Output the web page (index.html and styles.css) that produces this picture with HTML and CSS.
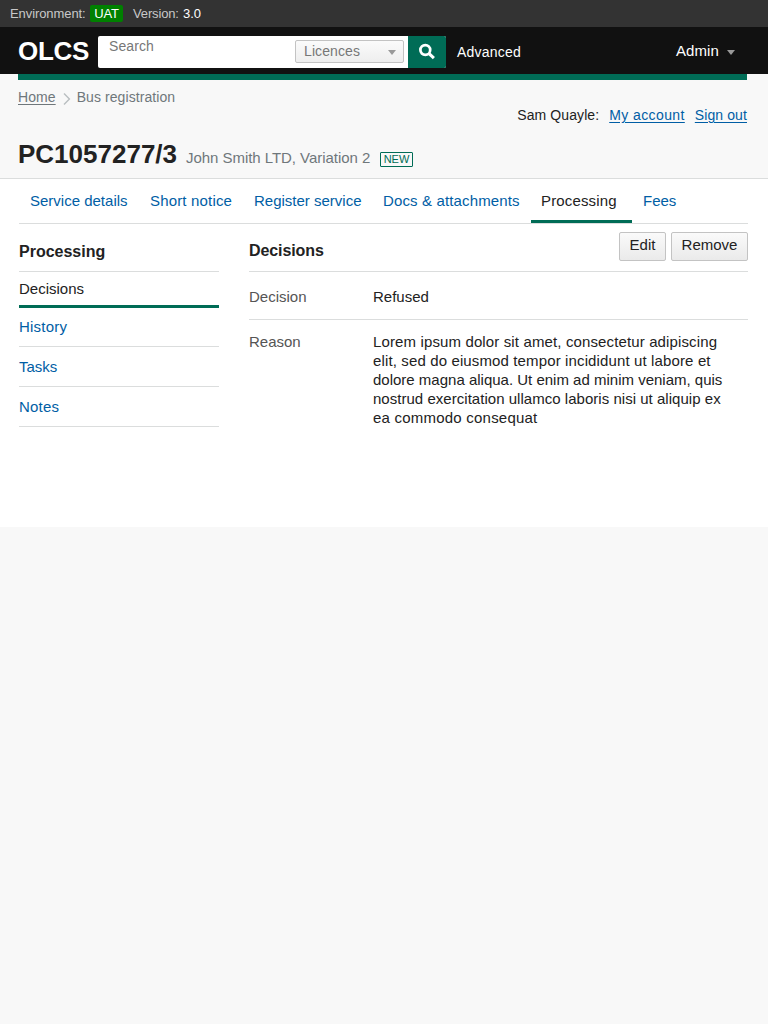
FILE: index.html
```html
<!DOCTYPE html>
<html lang="en">
<head>
<meta charset="utf-8">
<title>OLCS</title>
<link rel="stylesheet" href="styles.css">
</head>
<body>
<div class="env"><span class="env-label">Environment:</span><span class="env-tag">UAT</span><span class="env-version">Version:</span><span class="env-number">3.0</span></div>
<header class="header">
  <a class="logo">OLCS</a>
  <form class="search">
    <span class="search-input">Search</span>
    <span class="select">Licences<i class="caret"></i></span>
    <span class="search-button"><svg width="18" height="18" viewBox="0 0 18 18" fill="none" stroke="#fff"><circle cx="7.3" cy="7" r="4.9" stroke-width="2.7"/><path d="M10.8 10.4L15.9 15.2" stroke-width="3.1"/></svg></span>
  </form>
  <a class="advanced">Advanced</a>
  <a class="admin">Admin<i class="caret"></i></a>
</header>
<section class="page-header">
  <div class="bar"></div>
  <div class="meta">
    <nav class="crumbs"><a class="home">Home</a><svg width="8" height="12" viewBox="0 0 8 12" fill="none" stroke="#b9bec0" stroke-width="1.4"><path d="M1 .6L6.4 6L1 11.4"/></svg><span>Bus registration</span></nav>
    <div class="account"><span class="user">Sam Quayle:</span><a class="account-link my-account">My account</a><a class="account-link sign-out">Sign out</a></div>
  </div>
  <div class="title-row"><h1 class="title">PC1057277/3</h1><span class="subtitle">John Smith LTD, Variation 2</span><span class="status">NEW</span></div>
</section>
<main class="content">
  <nav class="tabs">
    <a class="tab tab-service">Service details</a><a class="tab tab-notice">Short notice</a><a class="tab tab-register">Register service</a><a class="tab tab-docs">Docs &amp; attachments</a><a class="tab tab-active">Processing</a><a class="tab">Fees</a>
  </nav>
  <div class="columns">
    <aside class="side">
      <h2 class="side-title">Processing</h2>
      <a class="side-link side-active">Decisions</a>
      <a class="side-link spaced">History</a>
      <a class="side-link">Tasks</a>
      <a class="side-link spaced">Notes</a>
    </aside>
    <section class="details">
      <div class="details-head"><h2 class="details-title">Decisions</h2><button class="button edit">Edit</button><button class="button remove">Remove</button></div>
      <dl class="row decision"><dt class="label">Decision</dt><dd class="value">Refused</dd></dl>
      <dl class="row reason"><dt class="label">Reason</dt><dd class="value"><span class="loose">Lorem ipsum dolor sit amet, consectetur adipiscing</span><br><span class="loose">elit, sed do eiusmod tempor incididunt ut labore et</span><br>dolore magna aliqua. Ut enim ad minim veniam, quis<br><span class="slight">nostrud exercitation ullamco laboris nisi ut aliquip ex</span><br><span class="spaced">ea commodo consequat</span></dd></dl>
    </section>
  </div>
</main>
</body>
</html>
```
FILE: styles.css
```css
* { box-sizing: border-box; }
body { margin: 0; background: #f8f8f8; color: #222; font: 15px/19px "Liberation Sans", Arial, sans-serif; }
h1, h2, dl, dd { margin: 0; }
.env { height: 27px; background: #333; color: #c8c8c8; display: flex; align-items: flex-start; padding: 5px 10px 0; font-size: 13px; line-height: 17px; }
.env-label { width: 76px; letter-spacing: -0.08px; }
.env-tag { background: #008000; color: #fff; border-radius: 2px; width: 33px; text-align: center; margin: 0 10px 0 4px; letter-spacing: -0.1px; }
.env-version { width: 46px; letter-spacing: -0.15px; }
.env-number { color: #fff; margin-left: 4px; }
.header { height: 47px; background: #111; color: #fff; display: flex; align-items: flex-start; padding: 9px 33px 0 18px; }
.logo { font-size: 26px; line-height: 30px; font-weight: bold; width: 80px; letter-spacing: -0.3px; }
.search { display: flex; width: 348px; height: 32px; background: #fff; border-radius: 2px; color: #777; font-size: 14px; }
.search-input { width: 197px; padding: 1px 11px; letter-spacing: 0.1px; }
.select { width: 109px; height: 23px; margin: 4px 4px 0 0; padding: 0 7px 0 8px; display: flex; align-items: center; justify-content: space-between; border: 1px solid #c3c3c3; border-radius: 2px; background: linear-gradient(#fbfbfb, #eee); letter-spacing: 0.1px; }
.caret { width: 0; height: 0; border: 4.5px solid transparent; border-top: 5px solid #999; border-bottom: 0; margin-top: 2px; }
.search-button { width: 38px; height: 32px; background: #006c56; border-radius: 0 2px 2px 0; display: flex; align-items: center; justify-content: center; }
.advanced { font-size: 14px; line-height: 18px; margin: 7px 0 0 11px; letter-spacing: 0.2px; }
.admin { display: flex; align-items: center; gap: 8px; line-height: 20px; margin: 5px 0 0 auto; letter-spacing: 0.1px; }
.page-header { height: 105px; border-bottom: 1px solid #dbdddd; padding: 0 21px 0 18px; }
.bar { height: 6px; background: #006c56; }
.meta { display: flex; justify-content: space-between; height: 52px; font-size: 14px; }
.crumbs { display: flex; align-items: flex-start; color: #6f777b; padding-top: 8px; letter-spacing: 0.08px; }
.crumbs svg { margin: 5px 6px 0 7px; }
.home { text-decoration: underline; text-underline-offset: 2px; }
.account { display: flex; padding-top: 26px; }
.user { letter-spacing: 0.1px; }
.account-link { color: #005ea5; text-decoration: underline; text-underline-offset: 2px; }
.my-account { letter-spacing: 0.4px; margin-left: 10px; }
.sign-out { margin-left: 10px; letter-spacing: 0.1px; }
.title-row { display: flex; align-items: flex-start; padding-top: 7px; }
.title { font-size: 26px; line-height: 30px; width: 168px; }
.subtitle { color: #6f777b; line-height: 19px; padding-top: 9px; width: 194px; white-space: nowrap; letter-spacing: -0.04px; }
.status { margin-top: 13px; width: 33px; height: 15px; border: 1px solid #006c56; border-radius: 1px; color: #006c56; font-size: 11px; line-height: 13px; text-align: center; }
.content { background: #fff; height: 348px; padding: 0 20px 0 19px; }
.tabs { height: 45px; border-bottom: 1px solid #dbdddd; display: flex; line-height: 22px; }
.tab { color: #005ea5; padding: 11px 0 0 11px; height: 44px; white-space: nowrap; }
.tab-service { width: 120px; }
.tab-notice { width: 104px; letter-spacing: 0.17px; }
.tab-register { width: 129px; }
.tab-docs { width: 159px; letter-spacing: 0.14px; }
.tab-active { width: 101px; color: #222; border-bottom: 3px solid #006c56; padding-left: 10px; letter-spacing: 0.15px; }
.columns { display: grid; grid-template-columns: 200px 499px; gap: 30px; }
.side { display: flex; flex-direction: column; }
.side-title { font-size: 16px; line-height: 20px; height: 48px; padding-top: 18px; border-bottom: 1px solid #dbdddd; }
.side-link { color: #005ea5; height: 40px; line-height: 20px; padding-top: 10px; border-bottom: 1px solid #dbdddd; }
.side-active { color: #222; height: 36px; padding-top: 7px; border-bottom: 3px solid #006c56; margin-bottom: -1px; }
.details-head { height: 48px; border-bottom: 1px solid #dbdddd; display: flex; align-items: flex-start; gap: 5px; padding-top: 8px; }
.details-title { font-size: 16px; line-height: 20px; margin: 9px auto 0 0; letter-spacing: -0.1px; }
.button { height: 29px; border: 1px solid #c3c3c3; border-radius: 2px; background: linear-gradient(#fafafa, #eaeaea); color: #222; font: inherit; padding: 0 0 4px; text-align: center; }
.edit { width: 47px; }
.remove { width: 77px; }
.row { display: grid; grid-template-columns: 124px 1fr; }
.label { color: #555; }
.value { white-space: nowrap; }
.loose { letter-spacing: 0.13px; }
.slight { letter-spacing: 0.03px; }
.spaced { letter-spacing: 0.22px; }
.decision { height: 48px; border-bottom: 1px solid #dbdddd; padding-top: 15px; }
.reason { padding-top: 12px; }
```
